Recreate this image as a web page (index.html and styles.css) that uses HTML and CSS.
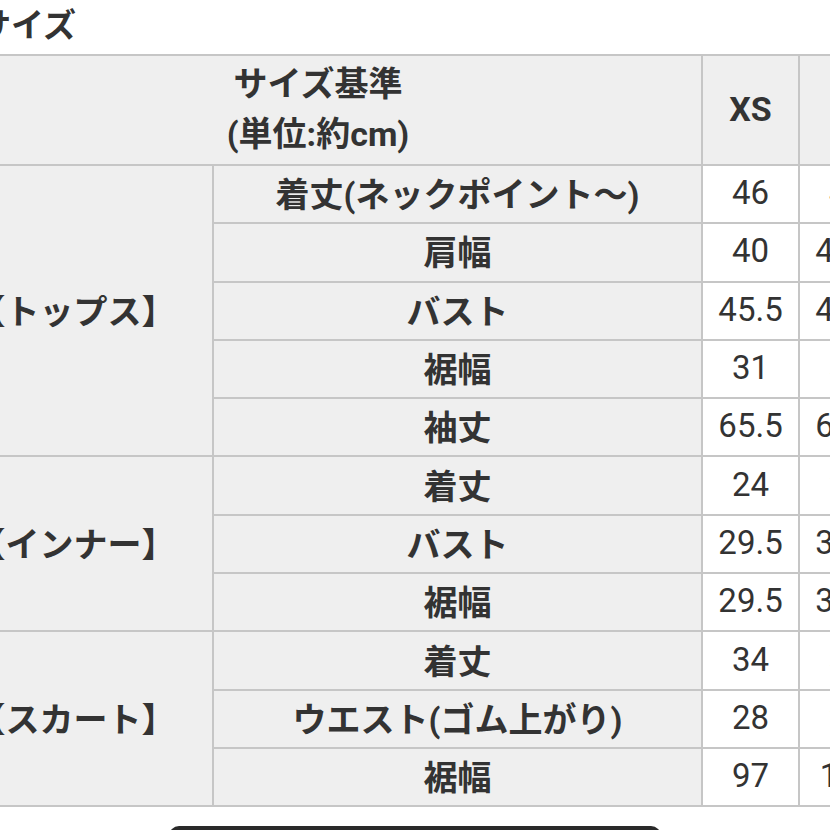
FILE: index.html
```html
<!DOCTYPE html>
<html lang="ja">
<head>
<meta charset="utf-8">
<link rel="stylesheet" href="styles.css">
</head>
<body>
<div class="page">
  <h2 class="title">サイズ</h2>
  <table class="size-table">
    <colgroup>
      <col class="c-group">
      <col class="c-item">
      <col class="c-val">
      <col class="c-val">
      <col class="c-val">
    </colgroup>
    <thead>
      <tr class="head-row">
        <th colspan="2" class="basis">サイズ基準<br>(単位:約cm)</th>
        <th>XS</th>
        <th>S</th>
        <th>M</th>
      </tr>
    </thead>
    <tbody>
      <tr><th rowspan="5" class="group">【トップス】</th><th class="item">着丈(ネックポイント〜)</th><td>46</td><td>47</td><td>48</td></tr>
      <tr><th class="item">肩幅</th><td>40</td><td>41.5</td><td>43</td></tr>
      <tr><th class="item">バスト</th><td>45.5</td><td>47.5</td><td>49.5</td></tr>
      <tr><th class="item">裾幅</th><td>31</td><td>33</td><td>35</td></tr>
      <tr><th class="item">袖丈</th><td>65.5</td><td>66.5</td><td>67.5</td></tr>
      <tr><th rowspan="3" class="group">【インナー】</th><th class="item">着丈</th><td>24</td><td>25</td><td>26</td></tr>
      <tr><th class="item">バスト</th><td>29.5</td><td>31.5</td><td>33.5</td></tr>
      <tr><th class="item">裾幅</th><td>29.5</td><td>31.5</td><td>33.5</td></tr>
      <tr><th rowspan="3" class="group">【スカート】</th><th class="item">着丈</th><td>34</td><td>35</td><td>36</td></tr>
      <tr><th class="item">ウエスト(ゴム上がり)</th><td>28</td><td>29</td><td>30</td></tr>
      <tr><th class="item">裾幅</th><td>97</td><td>100</td><td>103</td></tr>
    </tbody>
  </table>
  <div class="action">
    <button class="buy-btn" type="button"></button>
  </div>
</div>
</body>
</html>
```

FILE: styles.css
```css
html, body {
  margin: 0;
  padding: 0;
  background: #ffffff;
  overflow: hidden;
}

.page {
  width: 830px;
  height: 830px;
  overflow: hidden;
  font-family: Roboto, "Noto Sans CJK JP", sans-serif;
  color: #333333;
}

.title {
  margin: 0 0 0 -22px;
  height: 54px;
  line-height: 52px;
  font-size: 33px;
  font-weight: 700;
  color: #333333;
  white-space: nowrap;
}

.size-table {
  margin-left: -67px;
  width: 1059px;
  table-layout: fixed;
  border-collapse: collapse;
  font-size: 33px;
}

.c-group { width: 279px; }
.c-item { width: 489px; }
.c-val { width: 97px; }

.size-table th,
.size-table td {
  border: 2px solid #c6c6c6;
  padding: 0 4px 3px;
  text-align: center;
  vertical-align: middle;
  white-space: nowrap;
  overflow: hidden;
}

.size-table th {
  background: #efefef;
  font-weight: 700;
  font-size: 34px;
}

.size-table td {
  background: #ffffff;
  font-weight: 400;
}

.head-row {
  height: 110px;
}

.basis {
  line-height: 50px;
}

.size-table tbody tr {
  height: 58.3px;
}

.action {
  display: flex;
  justify-content: center;
  padding-top: 19px;
}

.buy-btn {
  width: 492px;
  height: 60px;
  border: none;
  border-radius: 10px;
  background: #2a2a2a;
}
```
